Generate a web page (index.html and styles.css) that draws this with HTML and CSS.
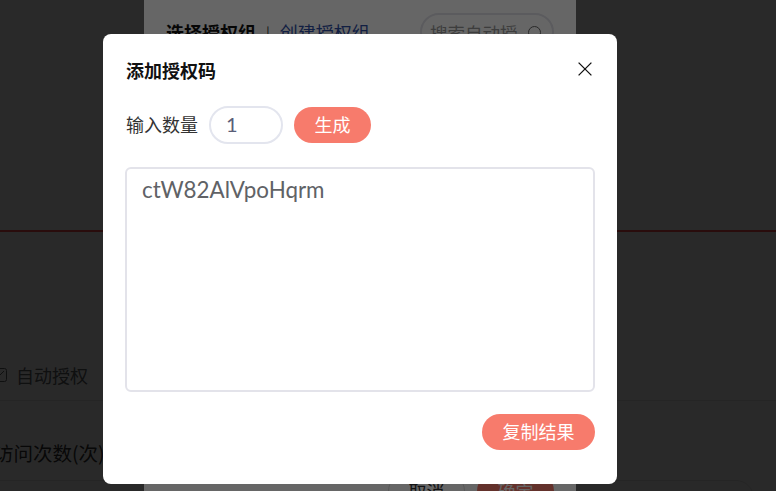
FILE: index.html
```html
<!DOCTYPE html>
<html lang="en">
<head>
    <meta charset="UTF-8">
    <meta name="viewport" content="width=device-width, initial-scale=1.0">
    <title>添加授权码</title>
    <link rel="stylesheet" href="styles.css">
</head>
<body>
    <div class="page">
        <div class="red-line"></div>
        <div class="auto-row">
            <span class="check">
                <svg width="14" height="14" viewBox="0 0 14 14" fill="none" stroke="currentColor" stroke-width="1">
                    <rect x="0.5" y="0.5" width="13" height="13" rx="2"></rect>
                    <path d="M3 11l8-8"></path>
                </svg>
            </span>
            <span>自动授权</span>
        </div>
        <div class="count-row">访问次数(次)</div>
        <div class="count-box"></div>
    </div>
    <div class="mask"></div>

    <div class="panel">
        <div class="panel-head">
            <span class="panel-title">选择授权组</span>
            <span class="panel-sep">|</span>
            <span class="panel-link">创建授权组</span>
            <span class="panel-search">
                <span>搜索自动授</span>
                <i class="search-icon"></i>
            </span>
        </div>
        <div class="panel-foot">
            <span class="panel-btn">取消</span>
            <span class="panel-btn primary">确定</span>
        </div>
    </div>
    <div class="mask"></div>

    <div class="modal">
        <div class="modal-head">
            <h2 class="modal-title">添加授权码</h2>
            <button class="close" aria-label="close">
                <svg width="14" height="14" viewBox="0 0 14 14" stroke="#111" stroke-width="1.3">
                    <path d="M0.6 0.6l12.8 12.8M13.4 0.6L0.6 13.4"></path>
                </svg>
            </button>
        </div>
        <div class="count-form">
            <label class="count-label" for="count">输入数量</label>
            <input class="count-input" id="count" type="text" value="1">
            <button class="btn btn-generate">生成</button>
        </div>
        <textarea class="result" readonly>ctW82AlVpoHqrm</textarea>
        <div class="modal-foot">
            <button class="btn btn-copy">复制结果</button>
        </div>
    </div>
</body>
</html>
```

FILE: styles.css
```css
* {
    box-sizing: border-box;
}

html, body {
    height: 100%;
}

body {
    margin: 0;
    overflow: hidden;
    background: #fff;
    color: #303133;
    font-family: "Noto Sans CJK SC", "Liberation Sans", sans-serif;
}

.page {
    height: 491px;
    overflow: hidden;
}

.red-line {
    height: 2px;
    margin-top: 230px;
    background: #ff4a4f;
}

.auto-row {
    display: flex;
    align-items: center;
    gap: 9px;
    height: 169px;
    padding: 130px 0 13px;
    border-bottom: 1px solid #e4e4e4;
    margin-left: -7px;
    font-size: 18px;
    color: #606266;
}

.check {
    display: flex;
}

.count-row {
    height: 79px;
    padding-top: 37px;
    margin-left: -6px;
    font-size: 19.5px;
    line-height: 30px;
    color: #333;
}

.count-box {
    width: 774px;
    height: 40px;
    margin-left: -20px;
    border: 1px solid #e4e4e4;
    border-radius: 18px;
}

.mask {
    position: fixed;
    inset: 0;
    background: rgba(0, 0, 0, 0.6);
}

.panel {
    position: fixed;
    top: -20px;
    left: 144px;
    bottom: -20px;
    width: 432px;
    padding: 34px 22px 0;
    background: #fff;
    display: flex;
    flex-direction: column;
    justify-content: space-between;
}

.panel-head {
    display: flex;
    align-items: center;
    height: 36px;
    font-size: 18px;
}

.panel-title {
    font-weight: 700;
    color: #111;
}

.panel-sep {
    margin: 0 10px;
    font-size: 14px;
    color: #333;
}

.panel-link {
    color: #2f4fa8;
}

.panel-search {
    display: flex;
    align-items: center;
    justify-content: space-between;
    width: 134px;
    height: 38px;
    margin-left: auto;
    padding: 0 11px 0 8px;
    border: 2px solid #e3e3ea;
    border-radius: 19px;
    font-size: 17.5px;
    color: #999;
}

.search-icon {
    width: 13px;
    height: 13px;
    border: 1.5px solid #666;
    border-radius: 50%;
}

.panel-foot {
    display: flex;
    justify-content: flex-end;
    gap: 12px;
    height: 38px;
}

.panel-btn {
    width: 77px;
    height: 36px;
    border: 1px solid #ddd;
    border-radius: 18px;
    font-size: 18px;
    line-height: 34px;
    text-align: center;
}

.panel-btn.primary {
    border: none;
    background: #f77b6c;
    color: #fff;
    line-height: 36px;
}

.modal {
    position: fixed;
    top: 34px;
    left: 103px;
    width: 514px;
    height: 450px;
    padding: 22px 22px 34px;
    border-radius: 8px;
    background: #fff;
}

.modal-head {
    display: flex;
    justify-content: space-between;
    align-items: flex-start;
    height: 50px;
    padding-left: 1px;
}

.modal-title {
    margin: 0;
    font-size: 18px;
    line-height: 28px;
    font-weight: 700;
    color: #111;
}

.close {
    display: flex;
    margin: 6px 3px 0 0;
    padding: 0;
    border: none;
    background: none;
    cursor: pointer;
}

.count-form {
    display: flex;
    align-items: center;
    height: 38px;
    padding-left: 1px;
}

.count-label {
    width: 83px;
    padding-bottom: 2px;
    font-size: 18px;
    color: #333;
}

.count-input {
    width: 74px;
    height: 38px;
    padding: 0 15px 2px;
    border: 2px solid #e3e5ee;
    border-radius: 19px;
    outline: none;
    font-family: "Lato", sans-serif;
    font-size: 20px;
    color: #5a5e78;
}

.btn {
    height: 36px;
    padding: 0 0 2px;
    border: none;
    border-radius: 18px;
    background: #f77b6c;
    color: #fff;
    font-family: inherit;
    font-size: 18px;
    cursor: pointer;
}

.btn-generate {
    width: 77px;
    margin-left: 11px;
}

.result {
    display: block;
    width: 470px;
    height: 225px;
    margin-top: 23px;
    padding: 6px 15px;
    border: 2px solid #e3e3ea;
    border-radius: 6px;
    outline: none;
    resize: none;
    font-family: "Lato", sans-serif;
    font-size: 22.4px;
    line-height: 30px;
    color: #606266;
}

.modal-foot {
    display: flex;
    justify-content: flex-end;
    margin-top: 22px;
}

.btn-copy {
    width: 113px;
}
```
